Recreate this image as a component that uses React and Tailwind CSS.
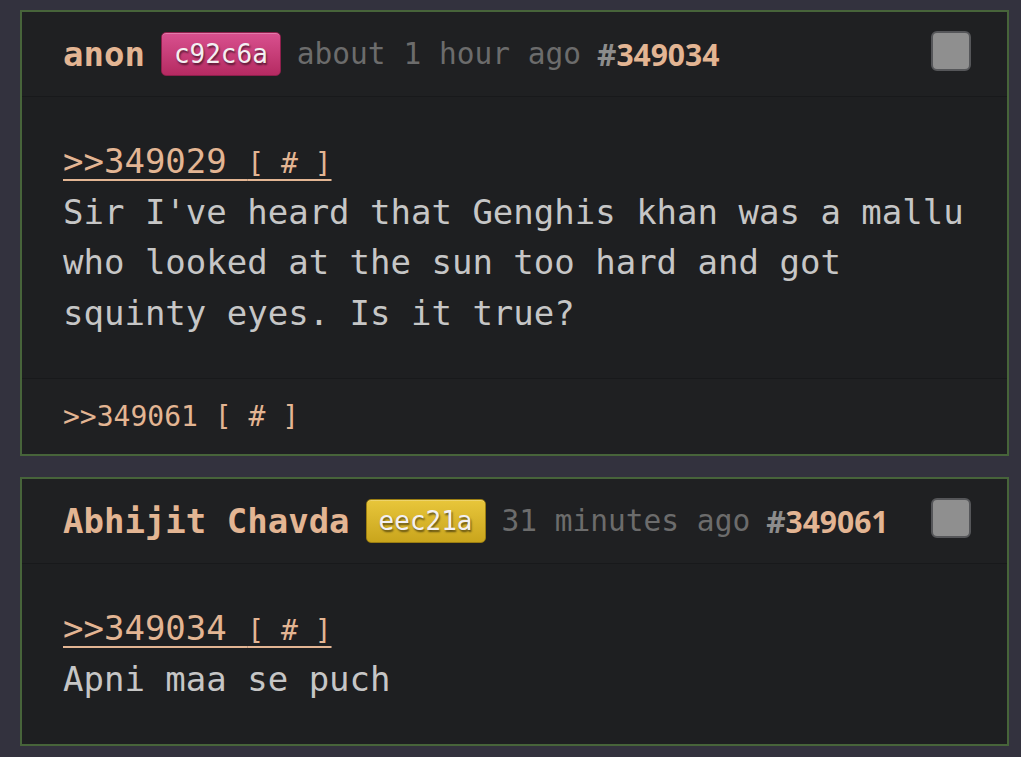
import React from 'react';

const mono = { fontFamily: '"DejaVu Sans Mono", "Liberation Mono", monospace' };

const Badge = ({ id, tone }) => (
  <span
    className={`inline-flex h-[44px] items-center rounded-[5px] px-[12px] text-[26px] leading-none text-[#f3f0f2] [text-shadow:1px_2px_2px_rgba(0,0,0,0.55)] shadow-[inset_0_1px_0_rgba(255,255,255,0.25)] ${
      tone === 'pink'
        ? 'bg-gradient-to-b from-[#d9508f] to-[#b52a62] border border-[#8e1f4c]'
        : 'bg-gradient-to-b from-[#e8c63a] to-[#c9a51c] border border-[#9a7d12]'
    }`}
    style={mono}
  >
    {id}
  </span>
);

const PostHeader = ({ name, id, tone, time, no }) => (
  <div className="flex h-[85px] items-center border-b border-[#18191b] bg-[#1f2022] pl-[41px] pr-[36px]">
    <div className="flex flex-1 items-center gap-[16px]">
      <span className="text-[34px] font-bold text-[#e3b593]" style={mono}>{name}</span>
      <Badge id={id} tone={tone} />
      <span className="text-[29.5px] text-[#6c6c6c]" style={mono}>{time}</span>
      <span className="text-[30px] font-bold" style={{ fontFamily: '"Open Sans", "Noto Sans", sans-serif' }}>
        <span className="text-[#8c8c8c]">#</span>
        <span className="text-[#e3b593]">{no}</span>
      </span>
    </div>
    <div className="h-[40px] w-[40px] -translate-y-[3px] rounded-[6px] border-2 border-[#555659] bg-[#8f8f8f]" />
  </div>
);

const Post = ({ name, id, tone, time, no, reply, lines, backlink }) => (
  <div className="border-2 border-[#47643a] bg-[#1e1f21]">
    <PostHeader name={name} id={id} tone={tone} time={time} no={no} />
    <div className="pl-[41px] pr-[36px] pt-[39px] pb-[40px] text-[34px] leading-[50.5px] text-[#c6c6c6]" style={mono}>
      <div className="h-[50.5px] overflow-hidden text-[#e3b593] underline decoration-2 underline-offset-[6px] whitespace-pre">
        {`>>${reply} `}
        <span className="text-[28px] leading-none">[ # ]</span>
      </div>
      {lines.map((l) => (
        <div key={l} className="whitespace-pre">{l}</div>
      ))}
    </div>
    {backlink && (
      <div className="flex h-[76px] items-center border-t border-[#18191b] bg-[#1f2022] pl-[41px] text-[28px] text-[#e3b593] whitespace-pre" style={mono}>
        {`>>${backlink} [ # ]`}
      </div>
    )}
  </div>
);

export default function App() {
  return (
    <div className="min-h-[757px] w-[1021px] bg-[#33323e] pl-[20px] pr-[12px] pt-[10px] pb-[10px]">
      <div className="flex flex-col gap-[21px]">
        <Post
          name="anon"
          id="c92c6a"
          tone="pink"
          time="about 1 hour ago"
          no="349034"
          reply="349029"
          lines={[
            "Sir I've heard that Genghis khan was a mallu",
            'who looked at the sun too hard and got',
            'squinty eyes. Is it true?',
          ]}
          backlink="349061"
        />
        <Post
          name="Abhijit Chavda"
          id="eec21a"
          tone="yellow"
          time="31 minutes ago"
          no="349061"
          reply="349034"
          lines={['Apni maa se puch']}
        />
      </div>
    </div>
  );
}
